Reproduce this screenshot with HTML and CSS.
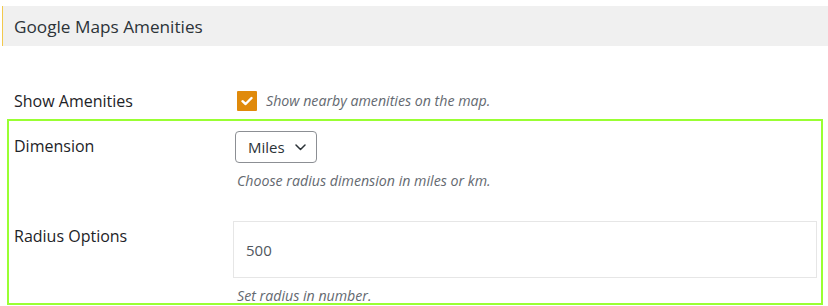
FILE: index.html
```
<!DOCTYPE html>
<html>
<head>
<meta charset="utf-8">
<link rel="stylesheet" href="styles.css">
</head>
<body>
<div class="header">Google Maps Amenities</div>
<div class="form">
  <div class="row row-plain">
    <div class="label label-check">Show Amenities</div>
    <div class="field check-field">
      <span class="checkbox">
        <svg width="12" height="10" viewBox="0 0 12 10"><path d="M1.5 5.2 L4.6 8 L10.5 2" fill="none" stroke="#fff" stroke-width="2.4" stroke-linecap="round" stroke-linejoin="round"/></svg>
      </span>
      <span class="desc inline">Show nearby amenities on the map.</span>
    </div>
  </div>
  <div class="group">
    <div class="row row-dim">
      <div class="label">Dimension</div>
      <div class="field">
        <div class="select">
          <span>Miles</span>
          <svg width="11" height="7" viewBox="0 0 11 7"><path d="M1 1 L5.5 5.5 L10 1" fill="none" stroke="#2c3338" stroke-width="1.5" stroke-linecap="round" stroke-linejoin="round"/></svg>
        </div>
        <div class="desc">Choose radius dimension in miles or km.</div>
      </div>
    </div>
    <div class="row row-radius">
      <div class="label">Radius Options</div>
      <div class="field">
        <div class="input">500</div>
        <div class="desc">Set radius in number.</div>
      </div>
    </div>
  </div>
</div>
</body>
</html>
```
FILE: styles.css
```
html, body {
  margin: 0;
  padding: 0;
  background: #fff;
}
body {
  font-family: "Open Sans", "Noto Sans", sans-serif;
  color: #1d2327;
  width: 828px;
  height: 306px;
  overflow: hidden;
}
.header {
  margin: 6px 0 0 2px;
  height: 40px;
  background: #f0f0f0;
  border-left: 1px solid #f2c94c;
  display: flex;
  align-items: center;
  padding-left: 11px;
  font-size: 17.2px;
  color: #2c3338;
}
.form {
  margin: 45px 0 0 7px;
  width: 816px;
}
.row {
  display: grid;
  grid-template-columns: 219px 1fr;
}
.row-plain {
  padding-left: 7px;
  height: 28px;
}
.label {
  font-size: 16px;
  line-height: 20px;
  padding-top: 5px;
}
.label-check {
  padding-top: 0;
  line-height: 20px;
}
.check-field {
  display: flex;
  align-items: center;
  height: 20px;
  padding-left: 4px;
}
.checkbox {
  width: 20px;
  height: 20px;
  background: #e08a0b;
  border-radius: 1px;
  display: flex;
  align-items: center;
  justify-content: center;
  margin-right: 9px;
}
.group {
  border: 2px solid #99ff33;
  padding: 10px 0 0 5px;
  height: 186px;
  box-sizing: border-box;
}
.row-radius {
  margin-top: 30px;
}
.select {
  margin-left: 2px;
  width: 82px;
  height: 32px;
  box-sizing: border-box;
  border: 1px solid #8c8f94;
  border-radius: 4px;
  display: flex;
  align-items: center;
  justify-content: space-between;
  padding: 0 10px 0 12px;
  font-size: 15px;
  color: #2c3338;
}
.desc {
  font-style: italic;
  font-size: 14.2px;
  color: #646970;
  line-height: 20px;
  margin: 8px 0 0 4px;
}
.desc.inline {
  margin: 0;
}
.input {
  width: 584px;
  height: 57px;
  box-sizing: border-box;
  border: 1px solid #e6e6e6;
  display: flex;
  align-items: center;
  padding-left: 12px;
  font-size: 15px;
  color: #50575e;
}
```
